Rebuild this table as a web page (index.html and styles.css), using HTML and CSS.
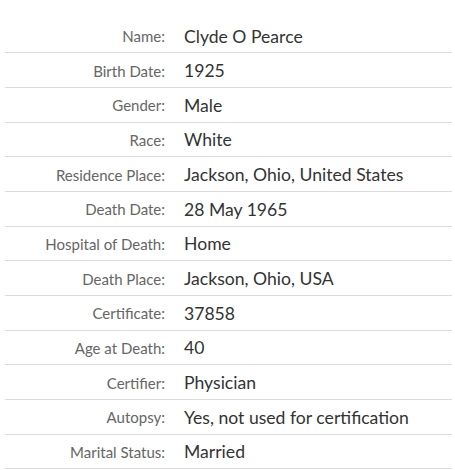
FILE: index.html
```html
<!DOCTYPE html>
<html>
<head>
<meta charset="utf-8">
<link rel="stylesheet" href="styles.css">
</head>
<body>
<div class="record">
  <div class="row"><div class="label">Name:</div><div class="value">Clyde O Pearce</div></div>
  <div class="row"><div class="label">Birth Date:</div><div class="value">1925</div></div>
  <div class="row"><div class="label">Gender:</div><div class="value">Male</div></div>
  <div class="row"><div class="label">Race:</div><div class="value">White</div></div>
  <div class="row"><div class="label">Residence Place:</div><div class="value">Jackson, Ohio, United States</div></div>
  <div class="row"><div class="label">Death Date:</div><div class="value">28 May 1965</div></div>
  <div class="row"><div class="label">Hospital of Death:</div><div class="value">Home</div></div>
  <div class="row"><div class="label">Death Place:</div><div class="value">Jackson, Ohio, USA</div></div>
  <div class="row"><div class="label">Certificate:</div><div class="value">37858</div></div>
  <div class="row"><div class="label">Age at Death:</div><div class="value">40</div></div>
  <div class="row"><div class="label">Certifier:</div><div class="value">Physician</div></div>
  <div class="row"><div class="label">Autopsy:</div><div class="value">Yes, not used for certification</div></div>
  <div class="row"><div class="label">Marital Status:</div><div class="value">Married</div></div>
</div>
</body>
</html>
```

FILE: styles.css
```css
html, body {
  margin: 0;
  padding: 0;
  background: #fff;
}
body {
  font-family: Lato, "Liberation Sans", sans-serif;
}
.record {
  width: 447px;
  margin-left: 5px;
  padding-top: 18.7px;
}
.row {
  display: grid;
  grid-template-columns: 160px 1fr;
  column-gap: 19px;
  align-items: center;
  height: 32.67px;
  padding-top: 1px;
  border-bottom: 1px solid #dcdcdc;
}
.label {
  text-align: right;
  color: #666;
  font-size: 15px;
}
.value {
  color: #333;
  font-size: 17.6px;
}
```
